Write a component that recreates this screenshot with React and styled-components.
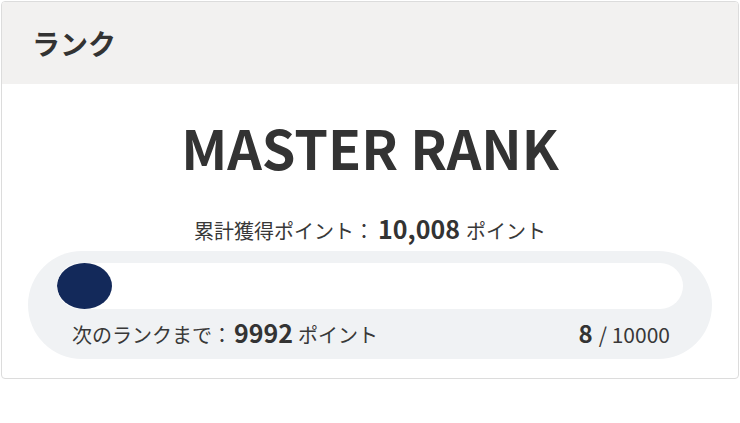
import React from "react";
import styled, { createGlobalStyle } from "styled-components";

const GlobalStyle = createGlobalStyle`
  html, body {
    margin: 0;
    padding: 0;
    background: #fff;
  }
  body {
    padding: 1px;
    font-family: "Noto Sans CJK JP", "Noto Sans", sans-serif;
    color: #333;
  }
`;

const Card = styled.section`
  width: 738px;
  box-sizing: border-box;
  border: 1px solid #dcdcdc;
  border-radius: 4px;
  overflow: hidden;
  background: #fff;
`;

const Header = styled.header`
  height: 82px;
  display: flex;
  align-items: center;
  padding-left: 30px;
  background: #f2f1f0;
`;

const HeaderTitle = styled.h2`
  margin: 0;
  font-size: 28px;
  font-weight: 700;
  color: #333;
`;

const Body = styled.div`
  display: flex;
  flex-direction: column;
  align-items: center;
  padding: 31px 26px 19px;
`;

const RankName = styled.h1`
  margin: 0;
  font-size: 54px;
  line-height: 64px;
  font-weight: 700;
  color: #333;
`;

const Total = styled.p`
  margin: 37px 0 6px;
  font-size: 20px;
  line-height: 28px;
  color: #383838;
`;

const Strong = styled.strong`
  font-size: ${({ size }) => size || 25}px;
  line-height: 1;
  font-weight: 700;
  color: #333;
  margin: ${({ tight }) => (tight ? "0 5px 0 2px" : "0 6px 0 4px")};
`;

const ProgressBox = styled.div`
  align-self: stretch;
  padding: 12px 29px 0;
  background: #f0f2f4;
  border-radius: 54px;
`;

const Track = styled.div`
  height: 46px;
  border-radius: 23px;
  background: #fff;
  overflow: hidden;
`;

const Fill = styled.div`
  height: 100%;
  min-width: 55px;
  border-radius: 50%;
  background: #13295a;
`;

const InfoRow = styled.div`
  height: 50px;
  display: flex;
  align-items: center;
  justify-content: space-between;
  padding: 0 13px 0 15px;
  font-size: 20px;
  line-height: 28px;
  color: #383838;
`;

const Count = styled.span`
  font-size: 21px;
`;

export default function App() {
  const current = 8;
  const goal = 10000;
  const pct = (current / goal) * 100;
  return (
    <>
      <GlobalStyle />
      <Card>
        <Header>
          <HeaderTitle>ランク</HeaderTitle>
        </Header>
        <Body>
          <RankName>MASTER RANK</RankName>
          <Total>
            累計獲得ポイント：<Strong>10,008</Strong>ポイント
          </Total>
          <ProgressBox>
            <Track>
              <Fill style={{ width: `${pct}%` }} />
            </Track>
            <InfoRow>
              <span>
                次のランクまで：<Strong tight>9992</Strong>ポイント
              </span>
              <Count>
                <Strong size={24}>{current}</Strong>/ {goal}
              </Count>
            </InfoRow>
          </ProgressBox>
        </Body>
      </Card>
    </>
  );
}
